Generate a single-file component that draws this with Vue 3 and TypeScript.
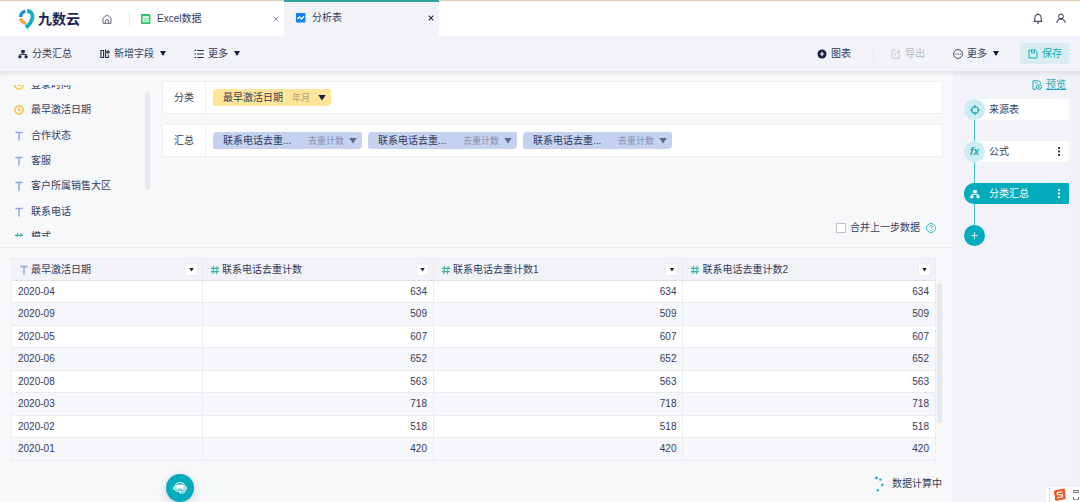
<script setup lang="ts">
import { ref } from 'vue'

type FieldKind = 'date' | 'text' | 'number'
interface Field { name: string; kind: FieldKind }

const fields: Field[] = [
  { name: '登录时间', kind: 'date' },
  { name: '最早激活日期', kind: 'date' },
  { name: '合作状态', kind: 'text' },
  { name: '客服', kind: 'text' },
  { name: '客户所属销售大区', kind: 'text' },
  { name: '联系电话', kind: 'text' },
  { name: '模式', kind: 'number' },
]
const metrics: number[] = [1, 2, 3]
const columns: Field[] = [
  { name: '最早激活日期', kind: 'text' },
  { name: '联系电话去重计数', kind: 'number' },
  { name: '联系电话去重计数1', kind: 'number' },
  { name: '联系电话去重计数2', kind: 'number' },
]
const rows: [string, number][] = [
  ['2020-04', 634],
  ['2020-09', 509],
  ['2020-05', 607],
  ['2020-06', 652],
  ['2020-08', 563],
  ['2020-03', 718],
  ['2020-02', 518],
  ['2020-01', 420],
]
const merge = ref(false)
</script>

<template>
  <div class="app">
    <header class="topbar">
      <div class="logo">
        <svg width="16" height="20" viewBox="0 0 16 20" fill="none" stroke-width="3.4">
          <path d="M1.6 8A6.4 6.4 0 0 1 6.4 2.2" stroke="#1e8fe8" />
          <path d="M1.6 9.4A5.8 5.8 0 0 0 7.2 14.2" stroke="#f9a13a" />
          <path d="M8.2 2C12.4 2.2 14.2 5.4 13.4 9C12.6 12.6 10.4 15.8 6.8 18.4" stroke="#0db3c0" stroke-width="3.8" />
        </svg>
        <span class="brand">九数云</span>
      </div>
      <button class="plain home" aria-label="首页">
        <svg width="10" height="10" viewBox="0 0 10 10" fill="none" stroke="#62667f">
          <path d="M1 4.2L5 .8L9 4.2V9.3H1ZM3.4 9.2V7.2A1.6 1.6 0 0 1 6.6 7.2V9.2" />
        </svg>
      </button>
      <nav class="tabs">
        <div class="tab first">
          <svg width="10" height="10" viewBox="0 0 10 10">
            <rect width="9.4" height="10" rx=".8" fill="#2fc46c" />
            <rect x="1.6" y="2.2" width="6.2" height="6" fill="#fff" />
            <path d="M1.6 4.2H7.8M1.6 6.2H7.8M3.7 4.2V8.2M5.8 4.2V8.2" stroke="#2fc46c" stroke-width=".5" />
          </svg>
          <a href="#">Excel数据</a>
          <button class="plain close" aria-label="关闭">
            <svg width="6" height="6" viewBox="0 0 6 6" stroke="currentColor"><path d="M.7 .7L5.3 5.3M5.3 .7L.7 5.3" /></svg>
          </button>
        </div>
        <div class="tab active">
          <svg width="10" height="10" viewBox="0 0 10 10">
            <rect width="9.4" height="9.6" rx=".6" fill="#0b83f0" />
            <path d="M1.4 6.2L3.3 3.9L5.3 6L7.9 3.3" fill="none" stroke="#fff" stroke-width="1.3" />
          </svg>
          <a href="#">分析表</a>
          <button class="plain close" aria-label="关闭">
            <svg width="6" height="6" viewBox="0 0 6 6" stroke="currentColor" stroke-width="1.1"><path d="M.7 .7L5.3 5.3M5.3 .7L.7 5.3" /></svg>
          </button>
        </div>
      </nav>
      <div class="account">
        <button class="plain" aria-label="通知">
          <svg width="10" height="11" viewBox="0 0 10 11" fill="none" stroke="#262b4c">
            <path d="M.6 8.3H9.4M1.8 8.3V4.6A3.2 3.2 0 0 1 8.2 4.6V8.3M5 .4V1.4M3.8 10H6.2" />
          </svg>
        </button>
        <button class="plain" aria-label="账户">
          <svg width="10" height="11" viewBox="0 0 10 11" fill="none" stroke="#262b4c">
            <circle cx="5" cy="3.5" r="2.4" /><path d="M.8 10C1 7.4 2.6 6 5 6C7.4 6 9 7.4 9.2 10" />
          </svg>
        </button>
      </div>
    </header>

    <div class="toolbar">
      <div class="tools">
        <button class="tool">
          <svg width="10" height="10" viewBox="0 0 10 10" fill="#262b4c">
            <path d="M3.2 1H6.8V4H3.2ZM.4 6.6H3.4V9.2H.4ZM6.6 6.6H9.6V9.2H6.6Z" />
            <path d="M5 4V5.4M1.9 6.8V5.4H8.1V6.8" fill="none" stroke="#262b4c" />
          </svg>分类汇总
        </button>
        <button class="tool">
          <svg width="10" height="10" viewBox="0 0 10 10" fill="none" stroke="#262b4c">
            <path d="M.9 1.5H3.6V8.5H.9ZM5.6 .6V8.5H8.4V6.2" stroke-width="1.1" /><path d="M8 1V5.2M6 3.1H10" stroke-width="1.1" />
          </svg>新增字段<i class="caret" />
        </button>
        <button class="tool">
          <svg width="10" height="10" viewBox="0 0 10 10" stroke="#262b4c"><path d="M.4 1.5H2M3.2 1.5H9.8M.4 5H2M3.2 5H9.8M.4 8.5H2M3.2 8.5H9.8" /></svg>更多<i class="caret" />
        </button>
      </div>
      <div class="actions">
        <button class="tool">
          <svg width="10" height="10" viewBox="0 0 10 10"><circle cx="5" cy="5" r="4.5" fill="#171b42" /><path d="M5 2.8V7.2M2.8 5H7.2" stroke="#fff" stroke-width="1.2" /></svg>图表
        </button>
        <span class="divider" />
        <button class="tool" disabled>
          <svg width="10" height="10" viewBox="0 0 10 10" fill="none" stroke="#c3c6d0"><path d="M5 1H1V9.2H8.6V5.5M4 6.4C4 4 5.4 2.8 8.6 2.8M6.8 .8L8.8 2.8L6.8 4.6" /></svg>导出
        </button>
        <button class="tool more">
          <svg width="10" height="10" viewBox="0 0 10 10"><circle cx="5" cy="5" r="4.4" fill="none" stroke="#3b4060" stroke-width=".9" /><path d="M2.3 5H3.4M4.5 5H5.6M6.7 5H7.8" stroke="#3b4060" /></svg>更多<i class="caret" />
        </button>
        <button class="tool save">
          <svg width="10" height="10" viewBox="0 0 10 10" fill="none" stroke="#12afbd"><path d="M1 1H7.4L9 2.6V9H1ZM3.4 1V4H6.4V1" /></svg>保存
        </button>
      </div>
    </div>

    <div class="workspace">
      <main class="main">
        <section class="config">
          <aside class="fields">
            <div class="viewport">
              <ul>
                <li v-for="f in fields" :key="f.name">
                  <svg width="10" height="10" viewBox="0 0 10 10" fill="none">
                    <template v-if="f.kind === 'date'"><circle cx="5" cy="5" r="4.1" stroke="#fbbd30" stroke-width="1.4" /><path d="M4.7 2.7V5.3H7" stroke="#fbbd30" stroke-width="1.3" /></template>
                    <path v-else-if="f.kind === 'text'" d="M1.4 1.5H8.6M5 1.5V9.5" stroke="#8ba3e0" stroke-width="1.4" />
                    <path v-else d="M3.6 1L2.8 9M7.2 1L6.4 9M1 3.4H9M1 6.6H9" stroke="#3db4a4" stroke-width="1.1" />
                  </svg>
                  {{ f.name }}
                </li>
              </ul>
            </div>
            <i class="bar" />
          </aside>
          <div class="setup">
            <div class="group">
              <span class="label">分类</span>
              <div class="chips">
                <button class="chip yellow"><span>最早激活日期</span><small>年月</small><i class="caret large" /></button>
              </div>
            </div>
            <div class="group">
              <span class="label">汇总</span>
              <div class="chips">
                <button v-for="m in metrics" :key="m" class="chip blue"><span>联系电话去重...</span><small>去重计数</small><i class="caret large" /></button>
              </div>
            </div>
            <div class="merge">
              <input id="merge" v-model="merge" type="checkbox" />
              <label for="merge">合并上一步数据</label>
              <button class="plain" aria-label="帮助">
                <svg width="10" height="10" viewBox="0 0 10 10" fill="none" stroke="#2bb4c2" stroke-width=".9">
                  <circle cx="5" cy="5" r="4.5" /><path d="M3.6 4A1.4 1.4 0 1 1 5.6 5.1Q5 5.4 5 6.1M5 7V7.9" />
                </svg>
              </button>
            </div>
          </div>
        </section>

        <section class="result">
          <div class="scroll">
            <table>
              <colgroup><col class="c1" /><col class="c2" /><col class="c3" /><col /></colgroup>
              <thead>
                <tr>
                  <th v-for="c in columns" :key="c.name" scope="col">
                    <div class="head">
                      <svg width="10" height="10" viewBox="0 0 10 10" fill="none">
                        <path v-if="c.kind === 'text'" d="M1.4 1.5H8.6M5 1.5V9.5" stroke="#8ba3e0" stroke-width="1.4" />
                        <path v-else d="M3.6 1L2.8 9M7.2 1L6.4 9M1 3.4H9M1 6.6H9" stroke="#3db4a4" stroke-width="1.1" />
                      </svg>
                      <span>{{ c.name }}</span>
                      <button class="filter" :aria-label="'筛选' + c.name"><i class="caret small" /></button>
                    </div>
                  </th>
                </tr>
              </thead>
              <tbody>
                <tr v-for="r in rows" :key="r[0]">
                  <td>{{ r[0] }}</td><td>{{ r[1] }}</td><td>{{ r[1] }}</td><td>{{ r[1] }}</td>
                </tr>
              </tbody>
            </table>
            <i class="bar" />
          </div>
          <div class="status" role="status">
            <svg width="12" height="16" viewBox="0 0 12 16" fill="#16b1bf">
              <circle cx="2.4" cy="2" r="1.4" /><circle cx="6.3" cy="3.6" r="1.2" /><circle cx="8.2" cy="9" r="1.2" /><circle cx="3.9" cy="14.2" r="1.2" />
            </svg>
            数据计算中
          </div>
        </section>
      </main>

      <aside class="steps">
        <a class="preview" href="#">
          <svg width="10" height="10" viewBox="0 0 10 10" fill="none" stroke="#12a9b8">
            <path d="M4 9.2H1V.8H6.6L8.4 2.6V4M3 3H5.4" /><ellipse cx="6.8" cy="7" rx="2.7" ry="2.2" /><circle cx="6.8" cy="7" r=".5" />
          </svg>
          <span>预览</span>
        </a>
        <ol>
          <li>
            <button class="step">
              <span class="dot"><svg width="10" height="10" viewBox="0 0 10 10" fill="none" stroke="#12a9b8"><circle cx="5" cy="5" r="3.3" stroke-width="1.1" /><path d="M5 0V3M5 7V10M0 5H3M7 5H10" stroke-width="1.2" /></svg></span>
              <span>来源表</span>
            </button>
          </li>
          <li>
            <button class="step">
              <span class="dot fx">fx</span>
              <span>公式</span>
              <svg class="kebab" width="2" height="9" viewBox="0 0 2 9"><path d="M0 0H2V2H0ZM0 3.5H2V5.5H0ZM0 7H2V9H0Z" fill="currentColor" /></svg>
            </button>
          </li>
          <li>
            <button class="step current">
              <span class="dot">
                <svg width="10" height="10" viewBox="0 0 10 10" fill="#fff"><path d="M3.2 1H6.8V4H3.2ZM.4 6.6H3.4V9.2H.4ZM6.6 6.6H9.6V9.2H6.6Z" /><path d="M5 4V5.4M1.9 6.8V5.4H8.1V6.8" fill="none" stroke="#fff" /></svg>
              </span>
              <span>分类汇总</span>
              <svg class="kebab" width="2" height="9" viewBox="0 0 2 9"><path d="M0 0H2V2H0ZM0 3.5H2V5.5H0ZM0 7H2V9H0Z" fill="currentColor" /></svg>
            </button>
          </li>
          <li>
            <button class="dot add" aria-label="添加步骤"><svg width="7" height="7" viewBox="0 0 7 7" stroke="#fff" stroke-width=".9"><path d="M3.5 .3V6.7M.3 3.5H6.7" /></svg></button>
          </li>
        </ol>
      </aside>
    </div>

    <button class="chat" aria-label="在线客服">
      <svg width="14" height="14" viewBox="0 0 14 14" fill="none" stroke="#fff">
        <path d="M2 5.4C2 .2 12 .2 12 5.4" stroke-width="1" />
        <path d="M.9 5.4V9M13.1 5.4V9" stroke-width="1.3" />
        <rect x="3.2" y="3.6" width="7.6" height="6" rx=".8" fill="#fff" stroke="none" />
        <path d="M2.4 5V9.2Q2.4 10.6 3.8 10.6H10.2Q11.6 10.6 11.6 9.2V5" stroke-width=".7" />
        <path d="M4.6 8.2H9.4" stroke="#03acbc" stroke-width=".9" />
        <path d="M5.8 10.6L7.6 12.8L8.4 10.6Z" fill="#fff" stroke-width=".6" />
        <path d="M12.6 9.6Q11.8 12.2 8.6 12.6" stroke-width=".9" />
      </svg>
    </button>
    <div class="ime">
      <svg width="34" height="15" viewBox="0 0 34 15" fill="none">
        <path d="M3.5 1V15" stroke="#c8c8cc" stroke-dasharray="1.5 1.5" />
        <path d="M8.4 4L18.2 2L19.2 11.6L9.8 13.4Z" fill="#f4511e" stroke="#f4511e" stroke-width="1" stroke-linejoin="round" />
        <path d="M16.6 4.8L11.4 5.6V7.6L16.4 7.8V9.8L11.2 10.8" stroke="#fff" stroke-width="1.3" />
        <path d="M27.5 3.5H32.5V5.5H27.5ZM27.5 10V12.5H29.5M30.5 12.5H32.5V10" stroke="#6f7278" />
      </svg>
    </div>
  </div>
</template>

<style>
body { margin: 0; }
</style>

<style scoped>
* { box-sizing: border-box; }
.app {
  position: relative;
  display: flex;
  flex-direction: column;
  min-height: 100vh;
  overflow: hidden;
  background: #f7f8fa;
  color: #353b5c;
  font: 10px/14px "Liberation Sans", "Noto Sans CJK SC", sans-serif;
}
button { border: 0; padding: 0; background: none; color: inherit; font: inherit; cursor: pointer; }
a { color: inherit; text-decoration: none; }
svg { flex: none; display: block; }
ul, ol { margin: 0; padding: 0; list-style: none; }
.plain { display: flex; }
.caret {
  width: 6px;
  height: 5px;
  margin-left: 2px;
  background: #171b42;
  clip-path: polygon(0 0, 100% 0, 50% 100%);
}
.caret.large { width: 8px; height: 6px; }
.caret.small { width: 5px; height: 4px; margin: 0; }
.bar { flex: none; width: 5px; border-radius: 3px; background: #e7e8ec; }

.topbar { display: flex; height: 36px; border-top: 1px solid #dcc6b4; background: #fff; }
.logo { display: flex; align-items: center; gap: 3px; width: 62px; margin-left: 19px; }
.brand { color: #1c1f52; font-size: 14px; line-height: 20px; font-weight: 700; white-space: nowrap; }
.home { width: 48px; align-items: center; justify-content: center; padding-left: 4px; }
.tabs { display: flex; margin-top: -1px; }
.tab { display: flex; align-items: center; gap: 6px; width: 155px; padding: 0 5px 0 12px; }
.tab.first { border-top: 1px solid #dcc6b4; background: linear-gradient(#e8e9ee, #e8e9ee) left center / 1px 14px no-repeat; }
.tab.active { border-top: 2px solid #2ba3a6; padding-bottom: 2px; background: #f2f3f8; }
.close { margin-left: auto; color: #8b8ea2; }
.active .close { color: #262b4c; }
.account { display: flex; align-items: center; gap: 13px; margin-left: auto; padding-right: 14px; }

.toolbar {
  display: flex;
  align-items: center;
  justify-content: space-between;
  height: 35px;
  padding: 0 11px 0 18px;
  background: #f2f3f8;
}
.tools, .actions { display: flex; align-items: center; }
.tools { gap: 28px; }
.tool { display: flex; align-items: center; gap: 4px; white-space: nowrap; }
.tool:disabled { color: #b3b6c3; }
.divider { width: 1px; height: 12px; margin: 0 17px 0 22px; background: #e6e7ec; }
.more { margin: 0 21px 0 28px; }
.save { height: 21px; padding: 0 7px 0 8px; border-radius: 1px; background: #d9edf1; color: #12afbd; }

.workspace { display: flex; flex: 1; box-shadow: inset 0 5px 5px -3px #0000001a; }
.main { display: flex; flex: 1; flex-direction: column; min-width: 0; }
.config { display: flex; height: 177px; padding: 10px 10px 0 0; border-bottom: 1px solid #e9eaee; }
.fields { display: flex; justify-content: space-between; width: 162px; padding: 4px 12px 0 14px; }
.fields .bar { height: 98px; margin-top: 7px; }
.viewport { display: flex; align-items: center; height: 152px; overflow: hidden; }
.viewport ul { display: flex; flex: none; flex-direction: column; height: 177px; }
.viewport li { display: flex; flex: 1; align-items: center; gap: 7px; white-space: nowrap; }
.setup { display: flex; flex: 1; flex-direction: column; gap: 10px; min-width: 0; }
.group { display: flex; height: 33px; border: 1px solid #eeeff2; background: #fff; }
.label { display: flex; align-items: center; justify-content: center; width: 43px; border-right: 1px solid #eeeff2; }
.chips { display: flex; align-items: center; gap: 6px; padding-left: 7px; }
.chip { display: flex; align-items: center; height: 17px; padding: 0 5px 0 10px; border-radius: 4px 2px 4px 2px; white-space: nowrap; }
.chip small { font-size: 9px; color: #8790ac; }
.yellow { width: 118px; background: #ffe597; }
.yellow small { margin-left: 9px; color: #a99f7d; }
.yellow .caret { margin-left: auto; }
.blue { width: 149px; background: #c4d2ef; }
.blue small { margin-left: auto; }
.blue .caret { margin-left: 5px; background: #5c678c; }
.merge { display: flex; align-items: center; justify-content: flex-end; gap: 4px; margin: auto 7px 12px 0; }
.merge input { appearance: none; width: 10px; height: 10px; margin: 0; border: 1px solid #bfc2cc; background: #fff; }
.merge input:checked { background: #12afbd; }
.merge .plain { margin-left: 2px; }

.result { display: flex; flex: 1; flex-direction: column; padding: 10px 11px 0; }
.scroll { display: flex; gap: 1px; }
.scroll .bar { height: 140px; margin-top: 25px; }
table { flex: 1; width: 100%; table-layout: fixed; border-collapse: separate; border-spacing: 0; border-left: 1px solid #eeeff2; }
.c1 { width: 191px; }
.c2 { width: 25%; }
.c3 { width: 27%; }
th, td { padding: 0; border-right: 1px solid #ebecf0; border-bottom: 1px solid #ebecf0; font-weight: 400; }
th { height: 23px; border-top: 1px solid #ebecf0; border-bottom-color: #dfe1e7; background: #f2f3f7; text-align: left; }
.head { display: flex; align-items: center; gap: 2px; padding: 0 4px 0 7px; white-space: nowrap; }
.filter { display: flex; align-items: center; justify-content: center; width: 13px; height: 13px; margin-left: auto; border: 1px solid #ecedf1; background: #fff; }
td { height: 22px; padding: 0 6px; background: #fff; text-align: right; }
td:first-child { text-align: left; }
tr:nth-child(even) td { height: 23px; background: #f6f7fa; }
.status { display: flex; align-items: center; justify-content: flex-end; gap: 6px; margin-top: 15px; }

.steps { width: 127px; padding: 7px 11px 0; background: #f2f3f8; box-shadow: inset 0 5px 5px -3px #0000001a; }
.preview { display: flex; align-items: center; justify-content: flex-end; gap: 4px; margin-right: 3px; color: #12a9b8; }
.preview span { text-decoration: underline; }
ol { margin-top: 7px; background: linear-gradient(#45bfca, #45bfca) 10px 0 / 1px 100% no-repeat; }
li + li .step, li + li .add { margin-top: 21px; }
.step {
  display: flex;
  align-items: center;
  gap: 4px;
  width: 100%;
  height: 21px;
  padding-right: 9px;
  background: linear-gradient(to right, transparent 10px, #fff 10px);
}
.dot { display: flex; align-items: center; justify-content: center; width: 21px; height: 21px; border-radius: 50%; background: #cbedf1; }
.fx { color: #12a9b8; font-weight: 700; font-style: italic; }
.current { border-radius: 11px 1px 1px 11px; background: #03acbc; color: #fff; }
.current .dot, .add { background: #03acbc; }
.kebab { margin-left: auto; }

.chat {
  position: absolute;
  left: 166px;
  bottom: 0;
  display: flex;
  align-items: center;
  justify-content: center;
  width: 28px;
  height: 28px;
  border-radius: 50%;
  background: #03acbc;
  box-shadow: 0 2px 8px #1b204733;
}
.ime { position: absolute; right: 0; bottom: 0; background: #fff; }
</style>
